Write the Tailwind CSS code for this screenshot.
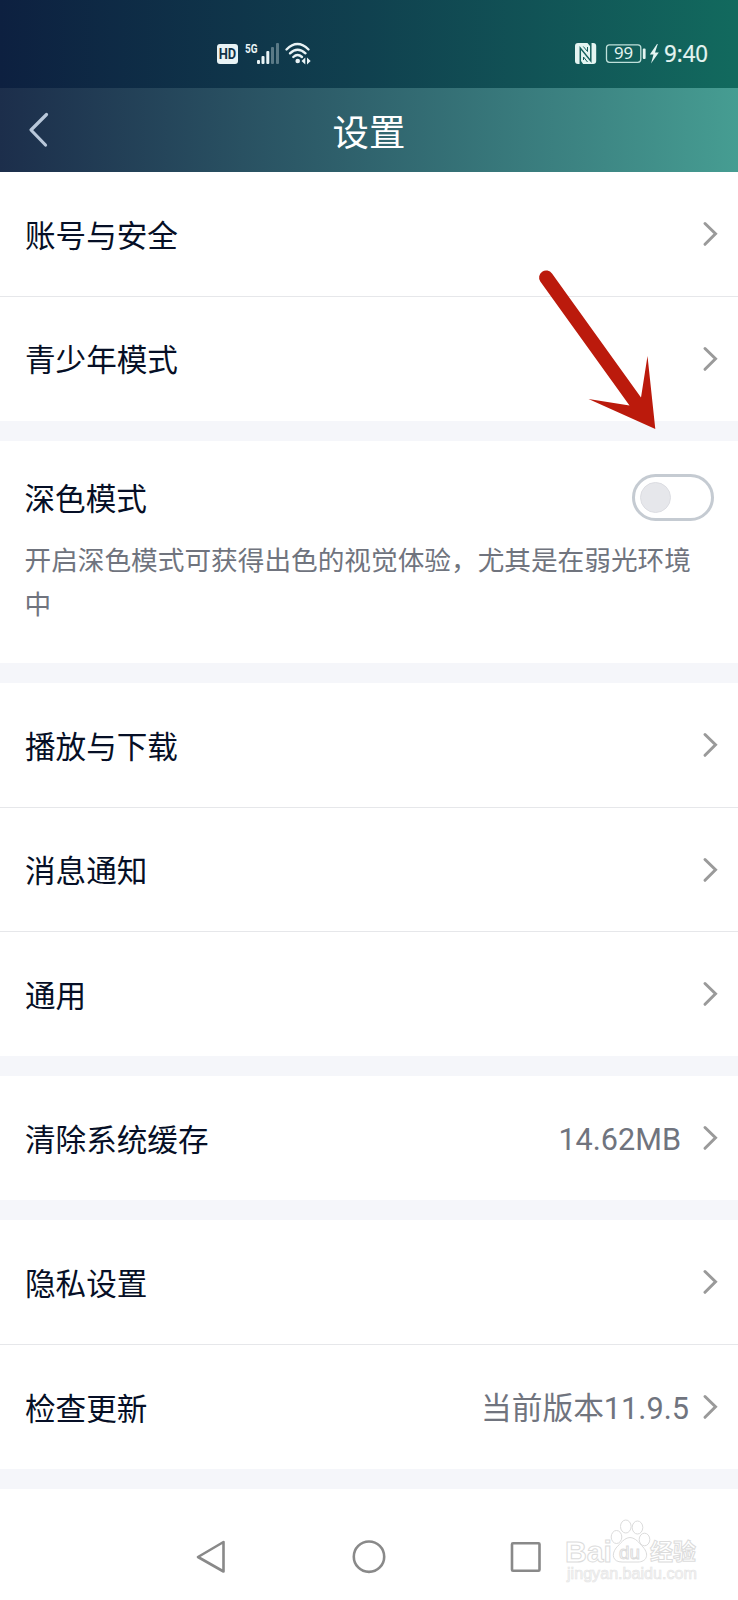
<!DOCTYPE html>
<html lang="zh-CN">
<head>
<meta charset="utf-8">
<title>设置</title>
<script src="https://cdn.jsdelivr.net/npm/@tailwindcss/browser@4"></script>
</head>
<body class="bg-white">
<svg class="hidden"><symbol id="chev" viewBox="0 0 16 26"><path d="M3 2.5 L13.500 12.800 L3 23.300" fill="none" stroke="#9a9a9a" stroke-width="3" stroke-linecap="round"/></symbol></svg>
<div class="relative flex h-[1600px] w-[738px] flex-col overflow-hidden bg-white font-['Roboto','Noto_Sans_CJK_SC',sans-serif] text-[30.6px] leading-[44px] text-[#060f26]">

  <!-- Status bar -->
  <div class="flex h-[88px] shrink-0 justify-between bg-linear-to-r from-[#0d2040] via-[#10414f] to-[#126a5e] pl-[210px] pr-[20px] pt-[34px]">
    <svg class="h-[40px] w-[110px]" viewBox="210 34 110 40" fill="#e9f3f5">
      <rect x="217" y="44" width="21" height="20" rx="3"/>
      <text x="227.5" y="59.4" font-family="Roboto" font-weight="700" font-size="14.5" text-anchor="middle" textLength="17.5" lengthAdjust="spacingAndGlyphs" fill="#123247">HD</text>
      <text x="245" y="52.5" font-family="Roboto" font-weight="700" font-size="13" textLength="12.5" lengthAdjust="spacingAndGlyphs">5G</text>
      <rect x="257" y="60" width="3" height="4" rx="1"/>
      <rect x="261.5" y="56" width="3" height="8" rx="1"/>
      <rect x="266.3" y="51" width="3" height="13" rx="1"/>
      <rect x="271" y="47" width="3" height="17" rx="1" opacity=".35"/>
      <rect x="276" y="43" width="3" height="21" rx="1" opacity=".35"/>
      <g fill="none" stroke="#e9f3f5" stroke-width="2.4" stroke-linecap="round">
        <path d="M286.5 49.5 Q297.5 38.5 308.500 49.5"/>
        <path d="M290 53.300 Q297.500 46 305.500 53.300"/>
        <path d="M293.300 57 Q297.500 53 302 57"/>
      </g>
      <circle cx="297.700" cy="61" r="2.300"/>
      <path d="M301.500 61 L305.300 57.500 V64.500 Z M310.700 61 L307 57.500 V64.500 Z"/>
    </svg>
    <svg class="h-[40px] w-[158px]" viewBox="560 34 158 40" fill="#e4f4f1">
      <rect x="575" y="43" width="21.200" height="21" rx="3"/>
      <path d="M580.300 64 V48 L590.800 61 V43" fill="none" stroke="#155f5c" stroke-width="1.500"/>
      <path d="M580.300 64.500 V60 L583.500 64.500 Z M590.800 42.500 V47 L587 42.500 Z" fill="#155f5c"/>
      <path d="M583.500 60 V57 L587.500 62 M587.500 47 V51.500 L583.300 46.500" fill="none" stroke="#155f5c" stroke-width="1"/>
      <rect x="606.500" y="44.800" width="34.300" height="17.500" rx="3" fill="none" stroke="#bfe0da" stroke-width="1.300"/>
      <text x="623.500" y="59.300" font-family="Noto Sans" font-size="16.800" text-anchor="middle">99</text>
      <rect x="642.800" y="48.500" width="2.800" height="10.500" rx="1"/>
      <path d="M657 44 L649.800 54.500 H653.500 L651 63.500 L658.800 52.500 H655 L657.800 44 Z"/>
      <text x="664" y="62" font-family="Noto Sans" font-size="23" stroke="#e4f4f1" stroke-width=".2" textLength="44" lengthAdjust="spacingAndGlyphs">9:40</text>
    </svg>
  </div>

  <!-- Title bar -->
  <header class="grid h-[84px] shrink-0 grid-cols-[1fr_auto_1fr] items-center bg-linear-to-r from-[#1c2e4b] via-[#30646e] to-[#469d92]">
    <svg class="ml-[28px] h-[36px] w-[22px]" viewBox="0 0 22 36"><path d="M18.500 2.500 L3 18 L17.500 33" fill="none" stroke="#b9c8da" stroke-width="3.200" stroke-linecap="round" stroke-linejoin="round"/></svg>
    <h1 class="pt-[8px] text-[36.4px] leading-[50px] text-white">设置</h1>
  </header>

  <main class="flex flex-col gap-[20px] bg-[#f5f6fa] pb-[20px]">
    <section class="bg-white">
      <div class="flex h-[125px] items-center justify-between border-b border-[#e6e7ea] pl-[25px] pr-[20px]"><span class="pt-[5px]">账号与安全</span><svg class="h-[26px] w-[16px]"><use href="#chev"/></svg></div>
      <div class="flex h-[124px] items-center justify-between pl-[25px] pr-[20px]"><span class="pt-[4px]">青少年模式</span><svg class="h-[26px] w-[16px]"><use href="#chev"/></svg></div>
    </section>

    <section class="h-[222px] bg-white pl-[24.500px] pr-[24.500px] pt-[32px]">
      <div class="flex h-[48px] items-center justify-between">
        <span class="pt-[5px]">深色模式</span>
        <div class="flex h-[47px] w-[82px] items-center rounded-full border-[3px] border-[#c5cbd2] pl-[5px]"><div class="size-[31px] rounded-full border border-[#dcdde2] bg-[#e6e7eb]"></div></div>
      </div>
      <p class="mt-[19px] whitespace-nowrap text-[26.660px] leading-[43.500px] text-[#70747e]">开启深色模式可获得出色的视觉体验，尤其是在弱光环境<br>中</p>
    </section>

    <section class="bg-white">
      <div class="flex h-[125px] items-center justify-between border-b border-[#e6e7ea] pl-[25px] pr-[20px]"><span class="pt-[5px]">播放与下载</span><svg class="h-[26px] w-[16px]"><use href="#chev"/></svg></div>
      <div class="flex h-[124px] items-center justify-between border-b border-[#e6e7ea] pl-[25px] pr-[20px]"><span class="pt-[5px]">消息通知</span><svg class="h-[26px] w-[16px]"><use href="#chev"/></svg></div>
      <div class="flex h-[124px] items-center justify-between pl-[25px] pr-[20px]"><span class="pt-[5px]">通用</span><svg class="h-[26px] w-[16px]"><use href="#chev"/></svg></div>
    </section>

    <section class="flex h-[124px] items-center bg-white pl-[25px] pr-[20px]">
      <span class="flex-1 pt-[5px]">清除系统缓存</span><span class="mr-[21px] pt-[4px] text-[#70747e]">14.62MB</span><svg class="h-[26px] w-[16px]"><use href="#chev"/></svg>
    </section>

    <section class="bg-white">
      <div class="flex h-[125px] items-center justify-between border-b border-[#e6e7ea] pl-[25px] pr-[20px]"><span class="pt-[5px]">隐私设置</span><svg class="h-[26px] w-[16px]"><use href="#chev"/></svg></div>
      <div class="flex h-[124px] items-center pl-[25px] pr-[20px]"><span class="flex-1 pt-[5px]">检查更新</span><span class="mr-[13px] pt-[4px] text-[30.700px] text-[#70747e]">当前版本11.9.5</span><svg class="h-[26px] w-[16px]"><use href="#chev"/></svg></div>
    </section>
  </main>

  <!-- System navigation -->
  <nav class="flex flex-1 items-start justify-center pt-[48px]">
    <svg class="h-[40px] w-[360px]" viewBox="189 1537 360 40" fill="none" stroke="#898989" stroke-width="2.600" stroke-linejoin="round">
      <path d="M198 1557 L223.500 1542 V1571.500 Z"/>
      <circle cx="369" cy="1556.700" r="15.200"/>
      <rect x="512" y="1543.200" width="27.500" height="27.500" rx="1"/>
    </svg>
  </nav>

  <!-- Pointer arrow -->
  <svg class="absolute left-[530px] top-[262px] h-[175px] w-[136px]" viewBox="530 262 136 175" fill="#bb1a0c">
    <path d="M540.300 281.500 A6.800 6.800 0 0 1 552 273.500 L641 397.500 L647.500 356 L655.300 429 L588.500 399 L629.500 405.500 Z"/>
  </svg>

  <!-- Watermark -->
  <svg class="absolute left-[560px] top-[1515px] h-[72px] w-[145px]" viewBox="560 1515 145 72" fill="#fff" stroke="#dcdcdc" stroke-width="1">
    <text x="565" y="1561.500" font-family="Liberation Sans" font-weight="700" font-size="30" textLength="47" lengthAdjust="spacingAndGlyphs">Bai</text>
    <ellipse cx="616.500" cy="1537" rx="5.300" ry="6.500"/>
    <ellipse cx="625.800" cy="1526.500" rx="5.300" ry="6.500"/>
    <ellipse cx="637.500" cy="1527.500" rx="5.300" ry="6.500"/>
    <ellipse cx="644.500" cy="1539.500" rx="5.300" ry="6.300"/>
    <path d="M630 1537.500 C636 1538 639 1543 643 1547 C650 1555 646 1562 638 1562 H622 C613 1562 611 1555 616 1548 C621 1543 624 1538 630 1537.500 Z"/>
    <text x="619" y="1558.500" font-family="Liberation Sans" font-size="19" textLength="21" lengthAdjust="spacingAndGlyphs">du</text>
    <text x="650" y="1560" font-family="Noto Sans CJK SC" font-weight="700" font-size="23" textLength="46" lengthAdjust="spacingAndGlyphs">经验</text>
    <text x="567" y="1579" font-family="Liberation Sans" font-size="16" fill="#f6f6f6" stroke="#e4e4e4" stroke-width=".6" textLength="130" lengthAdjust="spacingAndGlyphs">jingyan.baidu.com</text>
  </svg>
</div>
</body>
</html>
